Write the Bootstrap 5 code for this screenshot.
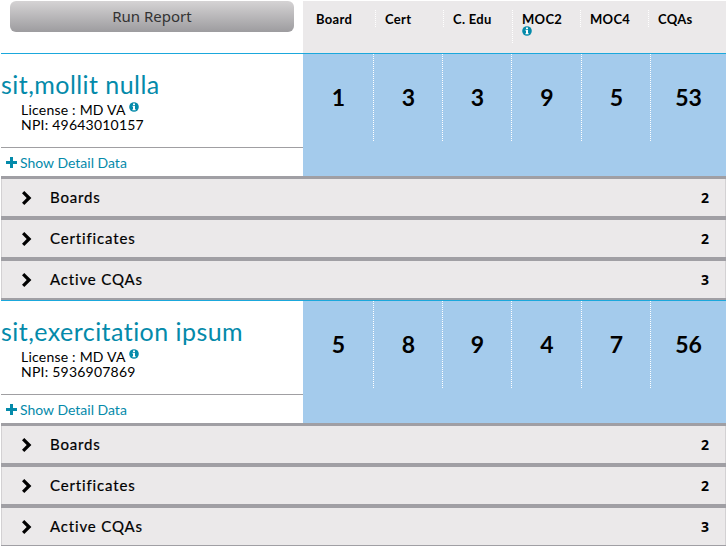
<!DOCTYPE html>
<html lang="en">
<head>
<meta charset="utf-8">
<meta name="viewport" content="width=device-width, initial-scale=1">
<title>Run Report</title>
<link href="https://cdn.jsdelivr.net/npm/bootstrap@5.3.0/dist/css/bootstrap.min.css" rel="stylesheet">
<style>
body{font-family:Lato,sans-serif;color:#000;background:#fff;overflow:hidden}
.report{width:725px;margin:1px 0 0 1px;height:545px;overflow:hidden}
.left-pane{width:302px}
.top-row{height:52px}
.run-btn{width:284px;height:31px;margin-left:9px;padding:0;border:0;border-radius:6px;background:linear-gradient(#d5d3d4,#9d9c9f);color:#333;font:15px/31px "Noto Sans",sans-serif}
.run-btn:hover{color:#333}
.heads{background:#ebe9ea;padding-top:9px;font-size:13px;font-weight:700;line-height:12px;letter-spacing:.3px}
.head-cell{height:17px;width:68px;padding:3px 0 0 9px}
.head-cell:first-child{width:73px;padding-left:13px}
.head-cell:nth-child(3){width:69px}
.head-cell.tall{height:34px}
.head-cell:not(:last-child),.score:not(:last-child){background:repeating-linear-gradient(#fff 0 1px,transparent 1px 2px) right top/1px 100% no-repeat}
.head-cell svg{display:block;margin-top:1px}
.person{height:123px;border-top:1px solid #1ba8dc}
.identity{height:94px;border-bottom:1px solid #a09fa2;padding-top:14px}
.person-name{font:25px/32px Lato,sans-serif;letter-spacing:.45px;color:#048aaa;margin:0;white-space:nowrap}
.ids{font:14px/15px Lato,sans-serif;letter-spacing:.22px;padding:2px 0 0 20px;white-space:nowrap}
.ids svg{vertical-align:3px}
.more{height:28px;padding-left:5px;color:#048aaa;font-size:14px;text-decoration:none}
.more svg{margin-right:3px}
.scores{background:#a4cbec}
.score{height:87px;width:69px;font-size:23px;font-weight:700;line-height:86px}
.score:first-child{width:71px}
.score:nth-child(4){width:70px}
.score:last-child{width:75px}
.section-row{height:41px;border:solid #a09fa4;border-width:2px 0;background:#ebe9ea;padding:0 17px 0 20px;box-shadow:inset 1px 0 #d3d1d3,inset -1px 0 #d3d1d3;font-size:15px}
.section-row:first-child{height:42px;border-top-width:3px}
.section-name{margin-left:17px;letter-spacing:.85px;-webkit-text-stroke:.2px #000}
.section-count{font:bold 14px "Noto Sans",sans-serif}
</style>
<script src="https://cdn.jsdelivr.net/npm/bootstrap@5.3.0/dist/js/bootstrap.bundle.min.js"></script>
</head>
<body>
<svg class="d-none">
<symbol id="info" viewBox="0 0 10 10"><circle cx="5" cy="5" r="4.8" fill="#048aaa"/><path fill="#fff" d="M4 1.5h2v1.4H4zM3.5 3.8H6v3.4h.7v1H3.4v-1H4V4.8h-.5z"/></symbol>
<symbol id="chevron" viewBox="0 0 12 14"><path d="M1 2.3 3.3 0 10.4 7 3.3 14 1 11.7 5.7 7z"/></symbol>
<symbol id="plus" viewBox="0 0 11 11"><path d="M5.5 0v11M0 5.5h11" stroke="#048aaa" stroke-width="3"/></symbol>
</svg>
<main class="report">
<header class="top-row d-flex">
<div class="left-pane"><button class="btn run-btn" type="button">Run Report</button></div>
<div class="heads d-flex flex-grow-1">
<div class="head-cell">Board</div><div class="head-cell">Cert</div><div class="head-cell tall">C. Edu</div><div class="head-cell">MOC2<svg width="10" height="10"><use href="#info"/></svg></div><div class="head-cell">MOC4</div><div class="head-cell">CQAs</div>
</div>
</header>
<article>
<div class="person d-flex">
<div class="left-pane">
<div class="identity"><h2 class="person-name">sit,mollit nulla</h2>
<div class="ids"><div class="lic">License : MD VA <svg width="10" height="10"><use href="#info"/></svg></div><div class="npi">NPI: 49643010157</div></div></div>
<a class="more d-flex align-items-center" href="#"><svg width="11" height="11"><use href="#plus"/></svg>Show Detail Data</a>
</div>
<div class="scores d-flex flex-grow-1 text-center"><div class="score">1</div><div class="score">3</div><div class="score">3</div><div class="score">9</div><div class="score">5</div><div class="score">53</div></div>
</div>
<div class="sections">
<div class="section-row d-flex align-items-center"><svg width="12" height="14"><use href="#chevron"/></svg><span class="section-name">Boards</span><span class="section-count ms-auto">2</span></div>
<div class="section-row d-flex align-items-center"><svg width="12" height="14"><use href="#chevron"/></svg><span class="section-name">Certificates</span><span class="section-count ms-auto">2</span></div>
<div class="section-row d-flex align-items-center"><svg width="12" height="14"><use href="#chevron"/></svg><span class="section-name">Active CQAs</span><span class="section-count ms-auto">3</span></div>
</div>
</article>
<article>
<div class="person d-flex">
<div class="left-pane">
<div class="identity"><h2 class="person-name">sit,exercitation ipsum</h2>
<div class="ids"><div class="lic">License : MD VA <svg width="10" height="10"><use href="#info"/></svg></div><div class="npi">NPI: 5936907869</div></div></div>
<a class="more d-flex align-items-center" href="#"><svg width="11" height="11"><use href="#plus"/></svg>Show Detail Data</a>
</div>
<div class="scores d-flex flex-grow-1 text-center"><div class="score">5</div><div class="score">8</div><div class="score">9</div><div class="score">4</div><div class="score">7</div><div class="score">56</div></div>
</div>
<div class="sections">
<div class="section-row d-flex align-items-center"><svg width="12" height="14"><use href="#chevron"/></svg><span class="section-name">Boards</span><span class="section-count ms-auto">2</span></div>
<div class="section-row d-flex align-items-center"><svg width="12" height="14"><use href="#chevron"/></svg><span class="section-name">Certificates</span><span class="section-count ms-auto">2</span></div>
<div class="section-row d-flex align-items-center"><svg width="12" height="14"><use href="#chevron"/></svg><span class="section-name">Active CQAs</span><span class="section-count ms-auto">3</span></div>
</div>
</article>
</main>
</body>
</html>
